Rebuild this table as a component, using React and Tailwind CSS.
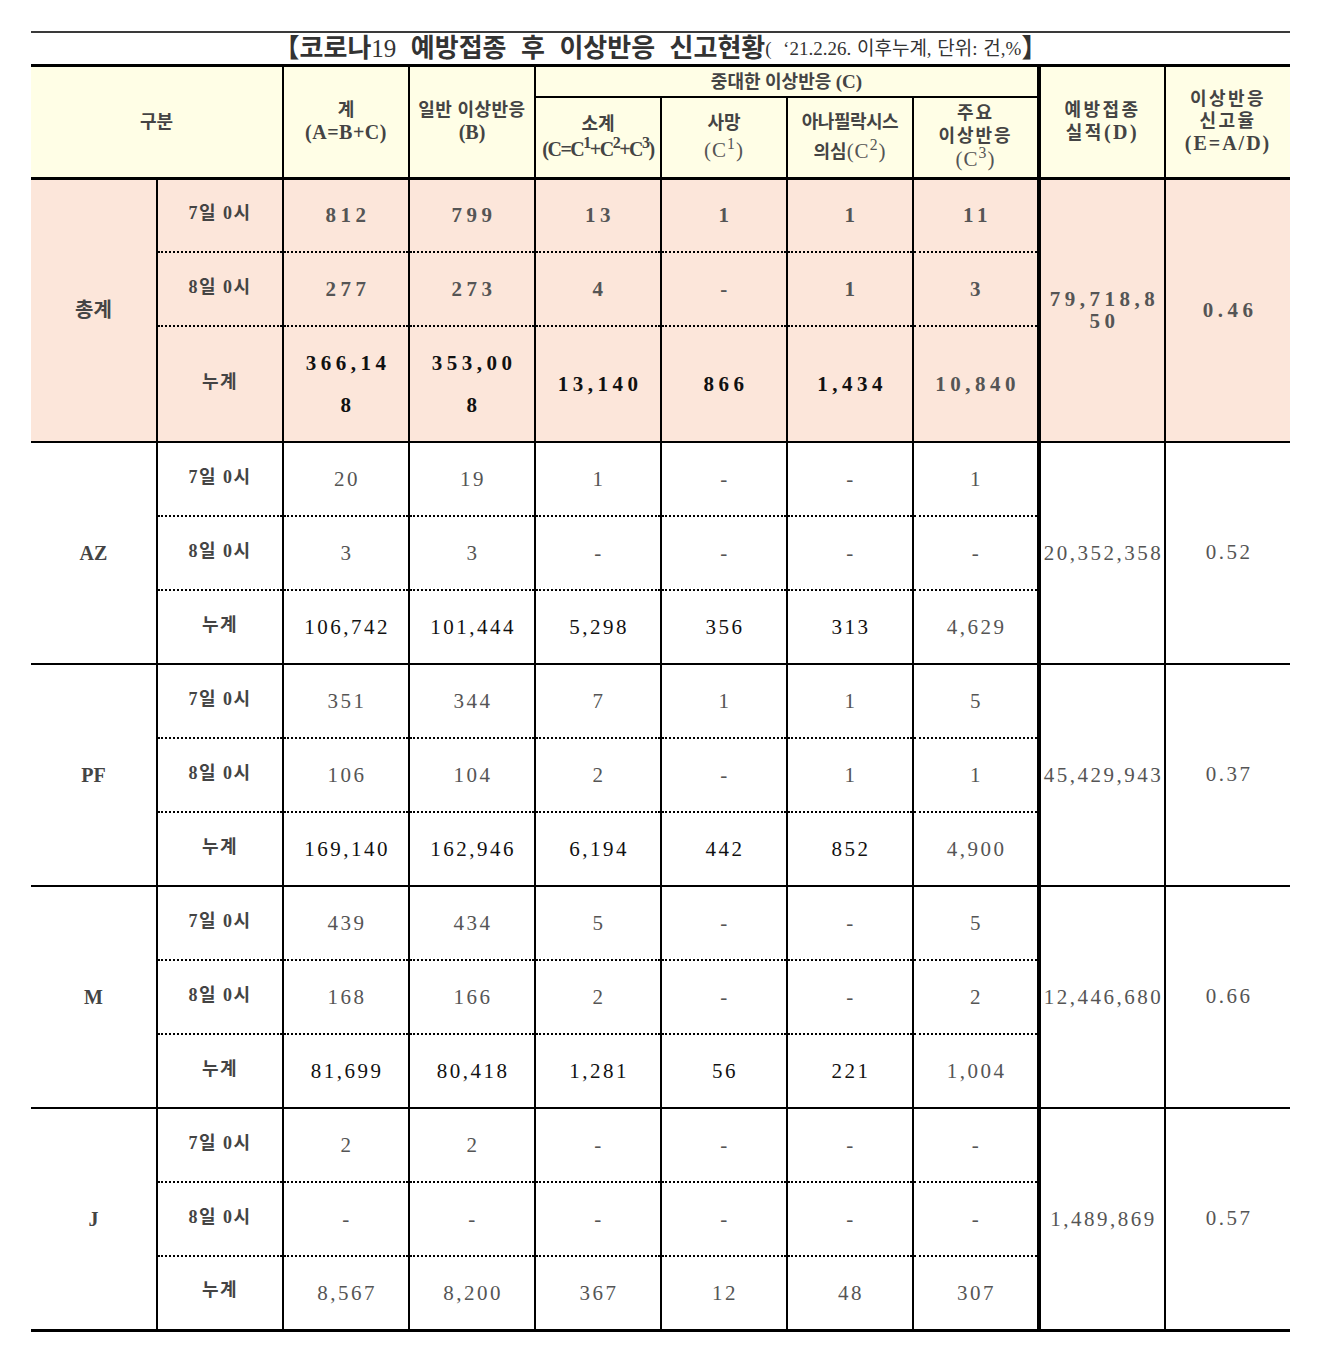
import React from 'react';

const FONT = "font-['Liberation_Serif','Noto_Sans_CJK_KR',serif]";

const groups = [
  {
    name: '총계',
    total: true,
    d: ['79,718,8', '50'],
    e: '0.46',
    rows: [
      ['7일 0시', ['812', '799', '13', '1', '1', '11']],
      ['8일 0시', ['277', '273', '4', '-', '1', '3']],
      ['누계', [['366,14', '8'], ['353,00', '8'], '13,140', '866', '1,434', '10,840']],
    ],
  },
  {
    name: 'AZ',
    d: ['20,352,358'],
    e: '0.52',
    rows: [
      ['7일 0시', ['20', '19', '1', '-', '-', '1']],
      ['8일 0시', ['3', '3', '-', '-', '-', '-']],
      ['누계', ['106,742', '101,444', '5,298', '356', '313', '4,629']],
    ],
  },
  {
    name: 'PF',
    d: ['45,429,943'],
    e: '0.37',
    rows: [
      ['7일 0시', ['351', '344', '7', '1', '1', '5']],
      ['8일 0시', ['106', '104', '2', '-', '1', '1']],
      ['누계', ['169,140', '162,946', '6,194', '442', '852', '4,900']],
    ],
  },
  {
    name: 'M',
    d: ['12,446,680'],
    e: '0.66',
    rows: [
      ['7일 0시', ['439', '434', '5', '-', '-', '5']],
      ['8일 0시', ['168', '166', '2', '-', '-', '2']],
      ['누계', ['81,699', '80,418', '1,281', '56', '221', '1,004']],
    ],
  },
  {
    name: 'J',
    last: true,
    lightTotal: true,
    d: ['1,489,869'],
    e: '0.57',
    rows: [
      ['7일 0시', ['2', '2', '-', '-', '-', '-']],
      ['8일 0시', ['-', '-', '-', '-', '-', '-']],
      ['누계', ['8,567', '8,200', '367', '12', '48', '307']],
    ],
  },
];

function HeaderRows() {
  const th = 'bg-[#fffee6] border-black text-[18px] font-bold text-[#444] text-center align-middle p-0';
  return (
    <thead>
      <tr className="h-[30px]">
        <th colSpan={2} rowSpan={2} className={`${th} border-b-[3px] leading-[22px]`}>구분</th>
        <th rowSpan={2} className={`${th} border-l-2 border-b-[3px] leading-[22px]`}>
          계<br />
          <span className="text-[20px] tracking-[0.5px]">(A=B+C)</span>
        </th>
        <th rowSpan={2} className={`${th} border-l-2 border-b-[3px] leading-[22px]`}>
          <span className="tracking-[0.5px]">일반 이상반응</span><br />
          <span className="text-[20px]">(B)</span>
        </th>
        <th colSpan={4} className={`${th} border-l-2 border-b-2 leading-[22px]`}>
          중대한 이상반응 <span className="text-[19px]">(C)</span>
        </th>
        <th rowSpan={2} className={`${th} border-l-4 border-b-[3px] leading-[22px] tracking-[2.5px]`}>
          예방접종<br />
          실적<span className="text-[20px]">(D)</span>
        </th>
        <th rowSpan={2} className={`${th} border-l-2 border-b-[3px] leading-[22px] tracking-[2.5px]`}>
          이상반응<br />
          신고율<br />
          <span className="text-[20px] tracking-[2px]">(E=A/D)</span>
        </th>
      </tr>
      <tr className="h-[81px]">
        <th className={`${th} border-l-2 border-b-[3px] leading-[25px]`}>
          소계<br />
          <span className="text-[20px] tracking-[-1.5px]">(C=C<sup className="text-[80%]">1</sup>+C<sup className="text-[80%]">2</sup>+C<sup className="text-[80%]">3</sup>)</span>
        </th>
        <th className={`${th} border-l-2 border-b-[3px] leading-[27px]`}>
          사망<br />
          <span className="text-[21px] font-normal text-[#555] tracking-[1px]">(C<sup>1</sup>)</span>
        </th>
        <th className={`${th} border-l-2 border-b-[3px] leading-[29px]`}>
          <span className="tracking-[-0.5px]">아나필락시스</span><br />
          의심<span className="text-[21px] font-normal text-[#555] tracking-[1px]">(C<sup>2</sup>)</span>
        </th>
        <th className={`${th} border-l-2 border-b-[3px] leading-[23px] tracking-[2px]`}>
          주요<br />
          이상반응<br />
          <span className="text-[21px] font-normal text-[#555] tracking-[1px]">(C<sup>3</sup>)</span>
        </th>
      </tr>
    </thead>
  );
}

function Value({ v }) {
  if (Array.isArray(v)) {
    return (
      <>
        {v[0]}
        <br />
        {v[1]}
      </>
    );
  }
  return v;
}

function Group({ g }) {
  const bg = g.total ? 'bg-[#fce6da]' : 'bg-white';
  const bottom = g.last ? 'border-b-[3px]' : 'border-b-2';
  const numBase = g.total
    ? 'text-[21px] font-bold tracking-[4.5px] pl-[4px]'
    : 'text-[21px] tracking-[2.5px] pl-[2px]';

  return (
    <>
      {g.rows.map(([label, vals], ri) => {
        const isSum = ri === 2;
        const rowH = g.total && isSum ? 'h-[116px]' : 'h-[74px]';
        const edge = isSum
          ? bottom
          : 'border-b-2 [border-bottom-style:dotted]';
        return (
          <tr key={label} className={rowH}>
            {ri === 0 && (
              <td
                rowSpan={3}
                className={`${bg} ${bottom} border-black text-center align-middle p-0 text-[20px] font-bold text-[#444]`}
              >
                {g.name}
              </td>
            )}
            <td
              className={`${bg} ${edge} border-l-2 border-black text-center align-middle p-0 pb-[4px] text-[18px] font-bold text-[#444] tracking-[1.5px]`}
            >
              {label}
            </td>
            {vals.map((v, ci) => {
              const dark = isSum && ci < 5 && !g.lightTotal;
              const color = dark ? 'text-[#111]' : 'text-[#555]';
              const lh = Array.isArray(v) ? 'leading-[42px]' : 'leading-[24px]';
              return (
                <td
                  key={ci}
                  className={`${bg} ${edge} border-l-2 border-black text-center align-middle p-0 ${numBase} ${color} ${lh}`}
                >
                  <Value v={v} />
                </td>
              );
            })}
            {ri === 0 && (
              <>
                <td
                  rowSpan={3}
                  className={`${bg} ${bottom} border-l-4 border-black text-center align-middle p-0 ${numBase} text-[#555] leading-[22px]`}
                >
                  {g.d.length > 1 ? (
                    <>
                      {g.d[0]}
                      <br />
                      {g.d[1]}
                    </>
                  ) : (
                    g.d[0]
                  )}
                </td>
                <td
                  rowSpan={3}
                  className={`${bg} ${bottom} border-l-2 border-black text-center align-middle p-0 ${numBase} text-[#555]`}
                >
                  {g.e}
                </td>
              </>
            )}
          </tr>
        );
      })}
    </>
  );
}

export default function App() {
  return (
    <div className={`min-h-[1352px] bg-white pt-[31px] pl-[31px] ${FONT}`}>
      <div className="w-[1259px]">
        <div className="flex h-[36px] items-center justify-center border-t-2 border-b-[3px] border-t-[#3a3a3a] border-b-black text-[#333] whitespace-nowrap">
          <span className="text-[26px] font-bold leading-none [word-spacing:8px]">
            【코로나<span className="font-normal text-[25px]">19</span> 예방접종 후 이상반응 신고현황
          </span>
          <span className="text-[19px] leading-none [word-spacing:1px]">(&nbsp; &lsquo;21.2.26. 이후누계, 단위: 건,%</span>
          <span className="text-[26px] font-bold leading-none">】</span>
        </div>
        <table className="w-[1259px] table-fixed border-collapse">
          <colgroup>
            <col className="w-[126px]" />
            <col className="w-[126px]" />
            <col className="w-[126px]" />
            <col className="w-[126px]" />
            <col className="w-[126px]" />
            <col className="w-[126px]" />
            <col className="w-[126px]" />
            <col className="w-[126px]" />
            <col className="w-[126px]" />
            <col className="w-[125px]" />
          </colgroup>
          <HeaderRows />
          <tbody>
            {groups.map((g) => (
              <Group key={g.name} g={g} />
            ))}
          </tbody>
        </table>
      </div>
    </div>
  );
}
